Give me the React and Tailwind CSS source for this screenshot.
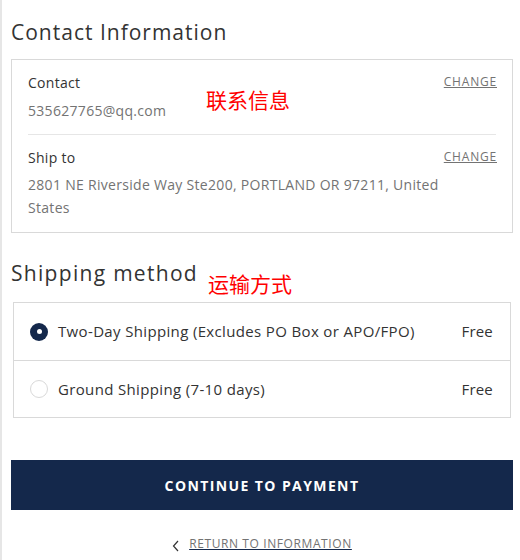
import { useState } from 'react';

const font = { fontFamily: '"Open Sans", "Noto Sans CJK SC", sans-serif' };

const methods = [
  { id: 'two-day', label: 'Two-Day Shipping (Excludes PO Box or APO/FPO)', price: 'Free' },
  { id: 'ground', label: 'Ground Shipping (7-10 days)', price: 'Free' },
];

const App = () => {
  const [method, setMethod] = useState('two-day');

  return (
    <div className="min-h-[560px] bg-white border-l-2 border-[#e6e6e6] pl-[9px] pr-[7px] pt-[18px]" style={font}>
      <h2 className="text-[21px] leading-[28px] text-[#333] tracking-[1px]">Contact Information</h2>

      {/* Contact box */}
      <div className="mt-[13px] border border-[#d9d9d9] px-4 pt-[13px] pb-[13px]">
        <div className="flex justify-between border-b border-[#e6e6e6] pb-[13px]">
          <div className="w-[178px] shrink-0">
            <div className="text-[14px] leading-[20px] text-[#333] tracking-[0.3px]">Contact</div>
            <div className="mt-[8px] text-[14px] leading-[20px] text-[#737373] tracking-[0.3px]">535627765@qq.com</div>
          </div>
          <div className="flex-1 pt-[15px] text-[21px] leading-[24px] text-[#ff0000]">联系信息</div>
          <a href="#" className="text-[12px] leading-[18px] text-[#737373] underline tracking-[0.8px] mr-[-1px]">CHANGE</a>
        </div>
        <div className="flex justify-between pt-[13px]">
          <div>
            <div className="text-[14px] leading-[20px] text-[#333] tracking-[0.3px]">Ship to</div>
            <div className="mt-[5px] text-[14px] leading-[23px] text-[#737373] tracking-[0.3px]">
              2801 NE Riverside Way Ste200, PORTLAND OR 97211, United States
            </div>
          </div>
          <a href="#" className="text-[12px] leading-[18px] text-[#737373] underline tracking-[0.8px] mr-[-1px] shrink-0">CHANGE</a>
        </div>
      </div>

      {/* Shipping method */}
      <div className="mt-[26px] flex items-start">
        <h2 className="w-[197px] shrink-0 text-[21px] leading-[28px] text-[#333] tracking-[1.3px]">Shipping method</h2>
        <span className="mt-[13px] text-[21px] leading-[24px] text-[#ff0000]">运输方式</span>
      </div>

      <div className="mt-[6px] mx-[2px] border border-[#d9d9d9]">
        {methods.map((m, i) => (
          <label
            key={m.id}
            className={`flex items-center h-[57px] pl-4 pr-[17px] cursor-pointer ${i > 0 ? 'border-t border-[#d9d9d9]' : ''}`}
          >
            <input
              type="radio"
              name="shipping"
              className="sr-only"
              checked={method === m.id}
              onChange={() => setMethod(m.id)}
            />
            {method === m.id ? (
              <span className="w-[18px] h-[18px] rounded-full bg-[#14284b] flex items-center justify-center">
                <span className="w-[5px] h-[5px] rounded-full bg-white" />
              </span>
            ) : (
              <span className="w-[18px] h-[18px] rounded-full border border-[#d9d9d9] bg-white" />
            )}
            <span className="ml-[10px] flex-1 text-[15px] text-[#333] tracking-[0.35px]">{m.label}</span>
            <span className="text-[15px] text-[#333] tracking-[0.2px]">{m.price}</span>
          </label>
        ))}
      </div>

      <button className="mt-[42px] w-full h-[50px] bg-[#14284b] text-white text-[14px] font-bold tracking-[1.4px]">
        CONTINUE TO PAYMENT
      </button>

      <div className="mt-[25px] flex justify-center items-center">
        <svg width="8" height="12" viewBox="0 0 8 12" className="mr-[9px] mt-[3px]">
          <path d="M6 1 L1.5 6 L6 11" fill="none" stroke="#333" strokeWidth="1.2" />
        </svg>
        <a href="#" className="text-[12px] leading-[18px] text-[#737373] underline decoration-[#14284b] tracking-[0.6px]">
          RETURN TO INFORMATION
        </a>
      </div>
    </div>
  );
};

export default App;
